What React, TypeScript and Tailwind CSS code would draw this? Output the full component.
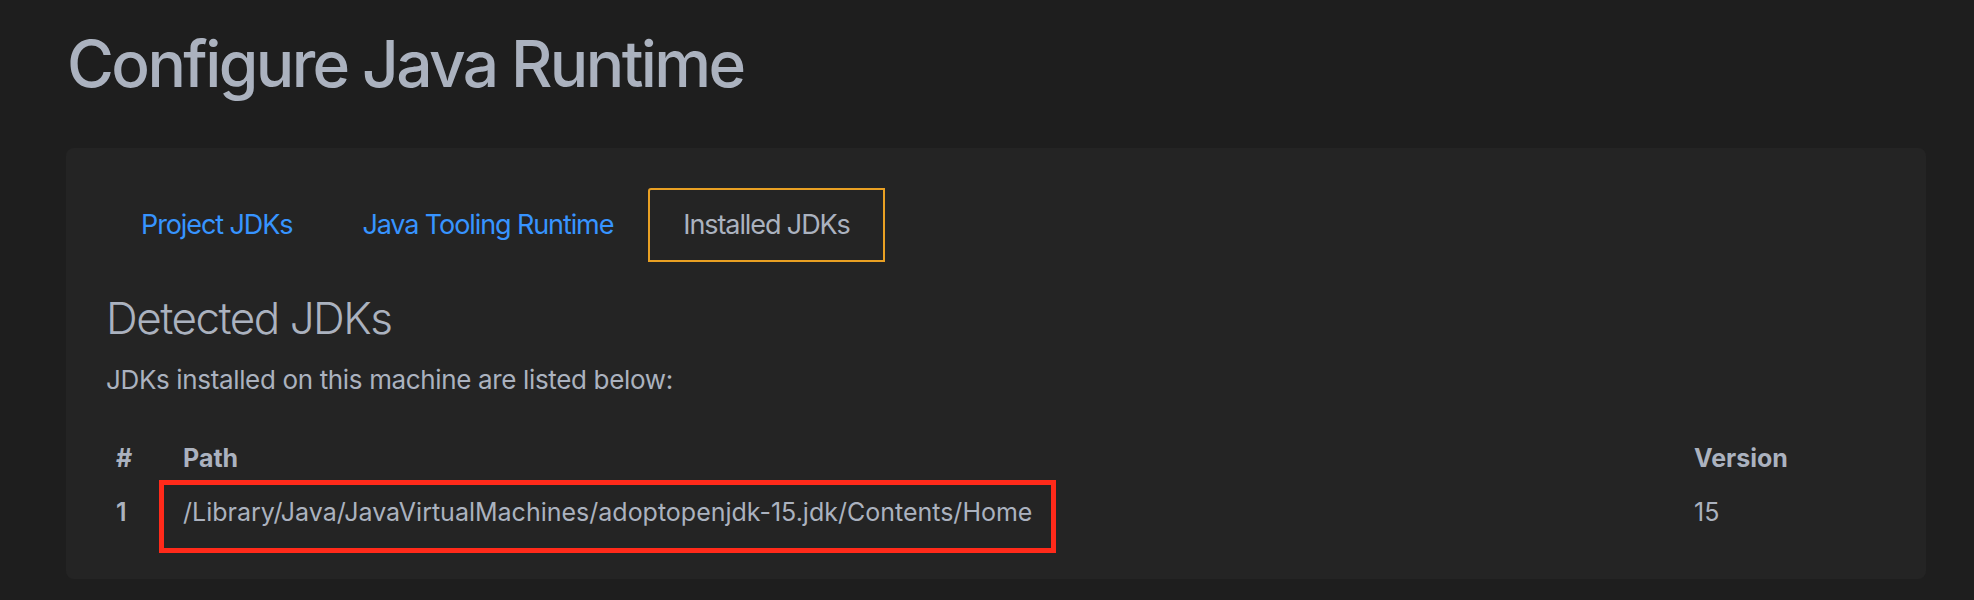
import React from "react";

export default function App() {
  const font = { fontFamily: "Inter, 'Noto Sans', sans-serif" };
  return (
    <div className="w-full h-[600px] bg-[#1e1e1e] pl-[66px] pr-[48px] pt-[32px] text-[#abb2bf]" style={font}>
      <h1 className="text-[64px] leading-[64px] font-medium tracking-[-2.6px] pl-[1px]">Configure Java Runtime</h1>
      <div className="mt-[52px] bg-[#242424] rounded-[8px] px-[40px] pt-[40px] h-[431px]">
        <div className="flex items-center">
          <div className="h-[74px] flex items-center px-[33px] border-2 border-transparent text-[27px] tracking-[-1.1px] text-[#3794ff]">Project JDKs</div>
          <div className="h-[74px] flex items-center px-[33px] border-2 border-transparent text-[27px] tracking-[-1.1px] text-[#3794ff]">Java Tooling Runtime</div>
          <div className="h-[74px] flex items-center px-[33px] border-2 border-[#e9a023] rounded-tl-[3px] text-[27px] tracking-[-1.1px] text-[#abb2bf]">Installed JDKs</div>
        </div>
        <h2 className="mt-[34px] text-[44px] leading-[44px] font-light tracking-[-1.5px]">Detected JDKs</h2>
        <p className="mt-[27px] text-[26px] leading-[26px] tracking-[-0.35px]">JDKs installed on this machine are listed below:</p>
        <div className="mt-[53px] grid grid-cols-[77px_1511px_1fr] text-[25px] leading-[25px]">
          <div className="pl-[10px] font-bold">#</div>
          <div className="font-bold">Path</div>
          <div className="font-bold">Version</div>
          <div className="pl-[10px] mt-[29px] font-semibold">1</div>
          <div className="relative mt-[29px]">
            <span>/Library/Java/JavaVirtualMachines/adoptopenjdk-15.jdk/Contents/Home</span>
            <div className="absolute top-[-20px] left-[-24px] w-[897px] h-[73px] border-[5px] border-[#ff2a1a] pointer-events-none" />
          </div>
          <div className="mt-[29px]">15</div>
        </div>
      </div>
    </div>
  );
}
